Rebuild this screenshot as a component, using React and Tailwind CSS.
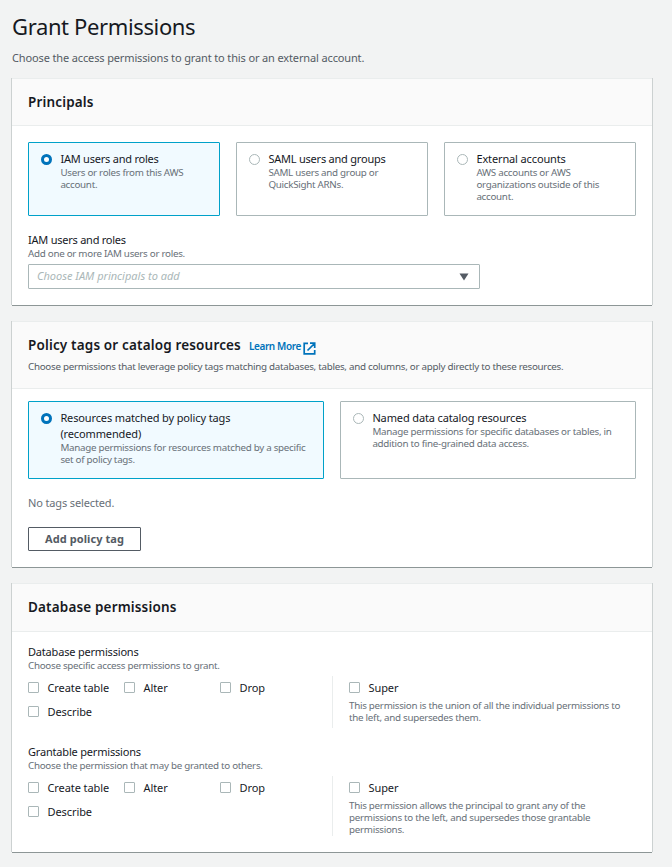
import React from "react";

function Card({ className, header, children }) {
  return (
    <section
      className={`flex flex-col border-t border-[#eaeded] bg-white shadow-[-1px_0_0_#ccd1d1,1px_0_0_#ccd1d1,0_1px_0_#8d9696] ${className}`}
    >
      <header className="border-b border-[#eaeded] bg-[#fafafa] px-4">{header}</header>
      {children}
    </section>
  );
}

function Title({ children, className = "" }) {
  return (
    <h2
      className={`text-[13.5px] leading-4 font-semibold tracking-[0.16px] text-[#16191f] ${className}`}
    >
      {children}
    </h2>
  );
}

function Label({ children, className = "tracking-[-0.16px]" }) {
  return <div className={`text-[11px] leading-4 text-[#16191f] ${className}`}>{children}</div>;
}

function Hint({ children }) {
  return <div className="text-[9.8px] leading-3 tracking-[-0.28px] text-[#687078]">{children}</div>;
}

function Radio({ checked }) {
  return (
    <span
      className={
        checked
          ? "mt-[11px] size-[11px] shrink-0 rounded-full border-[3px] border-[#0073bb] bg-white"
          : "mt-[11px] size-[11px] shrink-0 rounded-full border border-[#aab7b8] bg-white"
      }
    />
  );
}

function Tile({ checked, label, tight, children, className }) {
  return (
    <div
      className={`flex rounded-[1px] border pl-3 ${
        checked ? "border-[#00a1c9] bg-[#f1faff]" : "border-[#aab7b8] bg-white"
      } ${className}`}
    >
      <Radio checked={checked} />
      <div className="pt-2 pl-[8.4px] whitespace-nowrap">
        <Label className={tight ? "tracking-[-0.22px]" : "tracking-[-0.13px]"}>{label}</Label>
        <Hint>{children}</Hint>
      </div>
    </div>
  );
}

function Check({ label }) {
  return (
    <div className="flex h-6 items-center">
      <span className="mb-px size-[11px] rounded-[1px] border border-[#aab7b8] bg-white" />
      <span className="pl-[8.5px] text-[11px] leading-4 tracking-[-0.08px] text-[#16191f]">
        {label}
      </span>
    </div>
  );
}

function Permissions({ label, hint, className, children }) {
  return (
    <div>
      <Label className="tracking-[-0.19px]">{label}</Label>
      <Hint>{hint}</Hint>
      <div className={`mt-1 flex ${className}`}>
        <div className="grid w-[305px] grid-cols-[96px_96px_96px] content-start border-r border-[#eaeded]">
          <Check label="Create table" />
          <Check label="Alter" />
          <Check label="Drop" />
          <Check label="Describe" />
        </div>
        <div className="pl-4 whitespace-nowrap">
          <Check label="Super" />
          <Hint>{children}</Hint>
        </div>
      </div>
    </div>
  );
}

function ExternalIcon() {
  return (
    <svg
      width="13"
      height="13"
      viewBox="0 0 13 13"
      fill="none"
      stroke="#0073bb"
      strokeWidth="1.7"
      className="mt-[6px] ml-[2px]"
    >
      <path d="M5 1.3H1.2v10.5h10.5V8M7 1.2h4.7V6M11.5 1.5L4.5 8.5" />
    </svg>
  );
}

export default function App() {
  return (
    <main className="h-[867px] w-[672px] overflow-hidden bg-[#f2f3f3] pl-3 font-['Noto_Sans','Open_Sans',sans-serif]">
      <h1 className="pt-3 text-[22px] leading-7 tracking-[-0.37px] text-[#16191f]">
        Grant Permissions
      </h1>
      <p className="mt-[10px] text-[11px] leading-4 tracking-[-0.135px] text-[#545b64]">
        Choose the access permissions to grant to this or an external account.
      </p>

      <div className="mt-3 flex w-[640px] flex-col gap-4">
        <Card className="h-[227px]" header={<Title className="pt-[15px] pb-[15px]">Principals</Title>}>
          <div className="flex flex-col px-4 pt-4">
            <div className="flex gap-4">
              <Tile checked tight className="h-[74px] w-48" label="IAM users and roles">
                Users or roles from this AWS
                <br />
                account.
              </Tile>
              <Tile tight className="h-[74px] w-48" label="SAML users and groups">
                SAML users and group or
                <br />
                QuickSight ARNs.
              </Tile>
              <Tile className="h-[74px] w-48" label="External accounts">
                AWS accounts or AWS
                <br />
                organizations outside of this
                <br />
                account.
              </Tile>
            </div>
            <div className="mt-4">
              <Label className="tracking-[-0.24px]">IAM users and roles</Label>
              <Hint>Add one or more IAM users or roles.</Hint>
            </div>
            <div className="mt-1 flex h-[25px] w-[452px] items-center justify-between rounded-[1px] border border-[#aab7b8] pr-[10px] pl-2">
              <span className="text-[11px] text-[#aab7b8] italic">Choose IAM principals to add</span>
              <svg width="10" height="8" viewBox="0 0 10 8" fill="#545b64">
                <path d="M0.5 0.5h9L5 7.5z" />
              </svg>
            </div>
          </div>
        </Card>

        <Card
          className="h-[246px]"
          header={
            <div className="h-[66px] pt-[15px]">
              <div className="flex h-4 items-center whitespace-nowrap">
                <Title>Policy tags or catalog resources</Title>
                <a className="pt-[3px] pl-2 text-[10px] font-semibold tracking-[-0.4px] text-[#0073bb]">
                  Learn More
                </a>
                <ExternalIcon />
              </div>
              <p className="mt-2 text-[9.8px] leading-3 tracking-[-0.275px] whitespace-nowrap text-[#545b64]">
                Choose permissions that leverage policy tags matching databases, tables, and columns,
                or apply directly to these resources.
              </p>
            </div>
          }
        >
          <div className="flex flex-col items-start px-4 pt-3">
            <div className="flex gap-4">
              <Tile
                checked
                className="h-[78px] w-[296px]"
                label={
                  <>
                    Resources matched by policy tags
                    <br />
                    (recommended)
                  </>
                }
              >
                Manage permissions for resources matched by a specific
                <br />
                set of policy tags.
              </Tile>
              <Tile className="h-[78px] w-[296px]" label="Named data catalog resources">
                Manage permissions for specific databases or tables, in
                <br />
                addition to fine-grained data access.
              </Tile>
            </div>
            <p className="mt-4 text-[11px] leading-4 tracking-[-0.14px] text-[#687078]">
              No tags selected.
            </p>
            <button className="mt-4 h-6 w-[113px] rounded-[1px] border border-[#545b64] text-[11px] font-bold tracking-[0.08px] whitespace-nowrap text-[#545b64]">
              Add policy tag
            </button>
          </div>
        </Card>

        <Card
          className="h-[269px]"
          header={<Title className="pt-[15px] pb-4">Database permissions</Title>}
        >
          <div className="flex flex-col gap-4 px-4 pt-3">
            <Permissions
              className="h-[52px]"
              label="Database permissions"
              hint="Choose specific access permissions to grant."
            >
              This permission is the union of all the individual permissions to
              <br />
              the left, and supersedes them.
            </Permissions>
            <Permissions
              className="h-[60px]"
              label="Grantable permissions"
              hint="Choose the permission that may be granted to others."
            >
              This permission allows the principal to grant any of the
              <br />
              permissions to the left, and supersedes those grantable
              <br />
              permissions.
            </Permissions>
          </div>
        </Card>
      </div>
    </main>
  );
}
